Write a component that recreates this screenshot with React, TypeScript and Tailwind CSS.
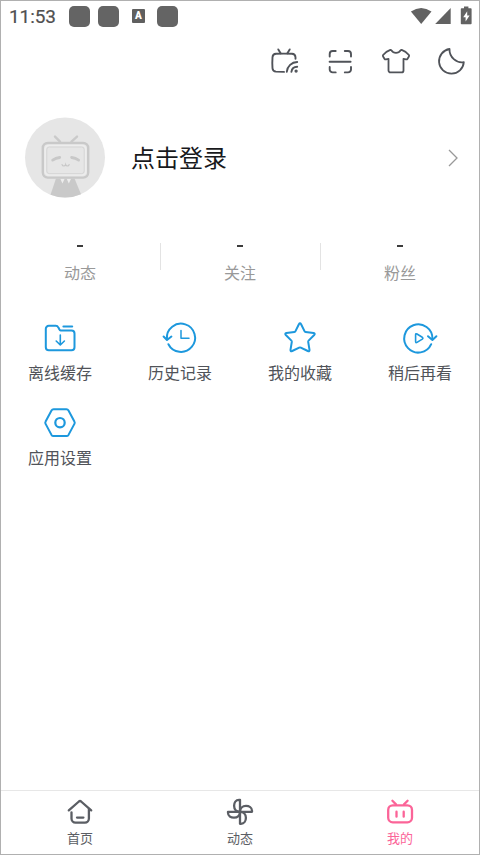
import React from "react";

interface MenuItem {
  label: string;
  icon: React.ReactNode;
}

const STATS = ["动态", "关注", "粉丝"];

interface LineProps {
  size: number;
  width?: number;
  className?: string;
  children: React.ReactNode;
}

// Shared stroke setup for the line icons
const Line: React.FC<LineProps> = ({ size, width = 2, className = "", children }) => (
  <svg
    width={size}
    height={size}
    viewBox={`0 0 ${size} ${size}`}
    fill="none"
    stroke="currentColor"
    strokeWidth={width}
    strokeLinecap="round"
    strokeLinejoin="round"
    className={`block shrink-0 ${className}`}
  >
    {children}
  </svg>
);

const MENU: MenuItem[] = [
  {
    label: "离线缓存",
    icon: (
      <>
        <path d="M20.6 12.4H31.5a3 3 0 0 1 3 3V29.2a3 3 0 0 1-3 3H8.8a3 3 0 0 1-3-3V10.8a3 3 0 0 1 3-3H15.8c1.6 0 2 .6 2.6 1.8l1 1.8q.4 1 1.2 1" />
        <path d="M23.4 8.6h8.8" />
        <path d="M20.3 17v9.6M16.2 23l4.1 4 4.1-4" strokeWidth={1.6} />
      </>
    ),
  },
  {
    label: "历史记录",
    icon: (
      <>
        <path d="M8.4 26.2A14.1 14.1 0 1 0 6.9 20.9" />
        <path d="M3.6 18.5l3.4 3.5 4.4-3.5" />
        <path d="M21 12.4v7.8h8" strokeWidth={1.5} />
      </>
    ),
  },
  {
    label: "我的收藏",
    icon: (
      <path d="M18.9 6.3q1.1-1.9 2.2 0l3.4 6.8q.3.7 1.1.8l8 1.2q1.9.4.6 1.9l-5.6 5.6q-.5.5-.4 1.3l1.3 7.9q.2 2-1.7 1.2l-7-3.4q-.8-.4-1.6 0l-7 3.4q-1.9.8-1.7-1.2l1.3-7.9q.1-.8-.4-1.3l-5.6-5.6q-1.3-1.5.6-1.9l8-1.2q.8-.1 1.1-.8z" />
    ),
  },
  {
    label: "稍后再看",
    icon: (
      <>
        <path d="M31.2 26.2A14.1 14.1 0 1 1 32.4 21" />
        <path d="M28 18.2l4.4 3.7 4-3.7" />
        <path d="M15.6 16.8q0-1.6 1.4-.8l5.3 3.3q1.2.9 0 1.8L17 24.4q-1.4.8-1.4-.8z" strokeWidth={1.6} />
      </>
    ),
  },
  {
    label: "应用设置",
    icon: (
      <>
        <path d="M13.6 6.3H26.4a2.4 2.4 0 0 1 2.1 1.2l5.9 11q.7 1.2 0 2.4l-5.9 11a2.4 2.4 0 0 1-2.1 1.2H13.6a2.4 2.4 0 0 1-2.1-1.2l-5.9-11q-.7-1.2 0-2.4l5.9-11a2.4 2.4 0 0 1 2.1-1.2z" />
        <circle cx={20} cy={19.7} r={4.7} strokeWidth={2.2} />
      </>
    ),
  },
];

const FAN_PETAL = "M16 15.8V3.8H15c-3.2 0-4.9 3-4.9 6 0 3.5 2.3 6 5.9 6z";

const TABS: MenuItem[] = [
  {
    label: "首页",
    icon: (
      <>
        <path d="M4.8 14.4L14.9 5.5q1.1-.9 2.2 0l10.1 8.9" />
        <path d="M7.5 16.3v6.3a4 4 0 0 0 4 4h9.400a4 4 0 0 0 4-4v-9.200" />
        <path d="M13 21.6h6.4" />
      </>
    ),
  },
  {
    label: "动态",
    icon: (
      <>
        {[0, 90, 180, 270].map((deg) => (
          <path key={deg} d={FAN_PETAL} transform={`rotate(${deg} 16 15.8)`} />
        ))}
      </>
    ),
  },
  {
    label: "我的",
    icon: (
      <>
        <rect x={4.2} y={9.3} width={23.8} height={17} rx={4.6} />
        <path d="M8.4 4.8l3.6 3.6M23.6 4.8L20 8.4M12.5 15.7v5M19.7 15.7v5" />
      </>
    ),
  },
];

function StatusBar() {
  return (
    <div className="flex h-8 items-center px-2 text-[#626262]">
      <span className="w-[61px] pt-0.5 pl-px font-['Roboto'] text-[19px] leading-[30px] tracking-[-0.1px] text-[#505050] [-webkit-text-stroke:0.2px_#505050]">
        11:53
      </span>
      <div className="flex items-center gap-2">
        <span className="h-[21px] w-[21px] rounded-[5px] bg-[#646464]" />
        <span className="h-[21px] w-[21px] rounded-[5px] bg-[#646464]" />
      </div>
      <span className="ml-[13px] flex h-[14px] w-[13px] items-center justify-center rounded-[1px] bg-[#5f5f5f] font-['Roboto'] text-[10px] font-black leading-none text-white">
        A
      </span>
      <span className="ml-3 h-[21px] w-[21px] rounded-[5px] bg-[#646464]" />
      <svg width="62" height="20" viewBox="0 0 62 20" fill="currentColor" className="ml-auto block">
        <path d="M0.9 5.6Q11.2-1.4 21.5 5.6L11.2 18z" />
        <path d="M40.7 2v16H25.2z" />
        <path d="M54 2.200V.6h4.4v1.6h2.400q.8 0 .8.8v14.400q0 .8-.8.8h-9.200q-.8 0-.8-.8V3q0-.8.8-.8z" />
        <path d="M57.2 5.2l-4 6h2.4v4.4l4-6h-2.4z" fill="white" />
      </svg>
    </div>
  );
}

function TopActions() {
  return (
    <div className="mt-[14px] flex justify-end gap-6 pr-3 text-[#505359]">
      {/* Cast */}
      <Line size={32} width={1.9}>
        <path d="M16 25.9L8 25.6q-3.3-.2-3.5-3.4-.4-5.5 0-11 .2-3.2 3.5-3.4 8-.4 16 0 3.3.2 3.5 3.4v1.5" />
        <path d="M10.3 3.4l2.3 3.9M21.7 3.4l-2.3 3.9" />
        <path d="M18.8 25.8A10.6 10.6 0 0 1 29.2 16M23.4 25.8A6 6 0 0 1 29.2 20.7" />
        <circle cx={28.1} cy={25.1} r={0.7} fill="currentColor" />
      </Line>
      {/* Scan */}
      <Line size={32} width={1.9}>
        <path d="M5.7 10.5V8a3 3 0 0 1 3-3h3M20.8 5H24a3 3 0 0 1 3 3v2.5M5.7 20.9v2.5a3 3 0 0 0 3 3h3M20.8 26.4H24a3 3 0 0 0 3-3v-2.5M5.6 15.7h21" />
      </Line>
      {/* Theme */}
      <Line size={32} width={1.8}>
        <path d="M10.3 3.9q.6-.2 1 .4 1.7 2.6 4.7 2.6t4.7-2.6q.4-.6 1-.4 4.4 1.5 7.2 5.1.5.8 0 1.6l-1.5 2.3q-.5.7-1.4.5l-2.5-.6V24.4a2 2 0 0 1-2 2H10.5a2 2 0 0 1-2-2V12.8l-2.5.6q-.9.2-1.4-.5l-1.5-2.3q-.5-.8 0-1.6 2.8-3.6 7.2-5.1z" />
      </Line>
      {/* Night mode */}
      <Line size={32} width={1.8}>
        <path d="M13.5 3A12.4 12.4 0 1 0 27.8 16.1C20.5 17.4 13.2 11.2 13.5 3z" />
      </Line>
    </div>
  );
}

function Avatar() {
  return (
    <svg width="80" height="80" viewBox="0 0 80 80" fill="none" className="block shrink-0 overflow-visible">
      <circle cx={40} cy={39.5} r={40} fill="#e6e6e6" />
      <path d="M31 60.5h18.5L56 76.2A40 40 0 0 1 25.5 76.7z" fill="#c9c9c9" />
      <path d="M35.2 60.5l2.2 5 2.4-5zM41.6 60.5l2.2 5 2.4-5z" fill="#ededed" />
      <path d="M30 18.6l5 5M52 18.6l-5.5 5" stroke="#cacaca" strokeWidth={2.4} strokeLinecap="round" />
      <rect x={17.8} y={25} width={45.4} height={34.6} rx={5} stroke="#c9c9c9" strokeWidth={2.4} />
      <rect x={20.3} y={27.5} width={40.4} height={29.6} rx={3.5} stroke="#ededed" strokeWidth={1.5} />
      <rect x={21.8} y={29} width={37.4} height={26.6} rx={2.5} stroke="#d4d4d4" strokeWidth={0.9} />
      <path d="M27.7 42.1q3-2 7-2.6M46.6 39.5q4 .6 7 2.6" stroke="#c8c8c8" strokeWidth={2.8} strokeLinecap="round" />
      <path d="M37 46.5q.4 1.5 1.8 1.5t1.8-1.5q.4 1.5 1.8 1.5t1.8-1.5" stroke="#c8c8c8" strokeWidth={1.1} strokeLinecap="round" />
    </svg>
  );
}

export default function App() {
  return (
    <div className="flex h-[855px] w-[480px] flex-col bg-white font-['Noto_Sans_CJK_SC',sans-serif] shadow-[inset_0_0_0_1px_#b0b0b0]">
      <StatusBar />
      <TopActions />

      {/* Login row */}
      <div className="mt-10 flex items-center pl-[25px] pr-[22px]">
        <Avatar />
        <span className="-mt-0.5 ml-[26px] text-2xl leading-8 text-[#18191c]">点击登录</span>
        <svg width="10" height="18" viewBox="0 0 10 18" fill="none" stroke="#999999" strokeWidth={1.3} className="-mt-px ml-auto block">
          <path d="M1 1l8 8-8 8" />
        </svg>
      </div>

      {/* Counters */}
      <div className="mt-[37px] grid grid-cols-3">
        {STATS.map((label, i) => (
          <div key={label} className="relative flex flex-col items-center">
            {i > 0 && <span className="absolute left-0 top-2 h-[27px] w-px bg-[#e3e3e3]" />}
            <span className="flex h-5 items-end pb-2">
              <span className="h-[2px] w-[6px] bg-[#3c3c3c]" />
            </span>
            <span className="mt-[5px] text-base leading-6 text-[#999999]">{label}</span>
          </div>
        ))}
      </div>

      {/* Shortcuts */}
      <div className="mt-[34px] grid grid-cols-4">
        {MENU.map((item) => (
          <div key={item.label} className="flex h-[85px] flex-col items-center">
            <Line size={40} className="text-[#1d98dd]">
              {item.icon}
            </Line>
            <span className="mt-[2px] text-base leading-6 text-[#505359]">{item.label}</span>
          </div>
        ))}
      </div>

      {/* Bottom tabs */}
      <div className="mx-px mb-px mt-auto grid h-16 grid-cols-[158px_162px_158px] border-t border-[#e7e7e7]">
        {TABS.map((tab) => (
          <div
            key={tab.label}
            className={`flex flex-col items-center pt-[5px] ${tab.label === "我的" ? "text-[#fb6498]" : "text-[#5b5e64]"}`}
          >
            <Line size={32} width={2.3}>
              {tab.icon}
            </Line>
            <span className="text-[13px] leading-5">{tab.label}</span>
          </div>
        ))}
      </div>
    </div>
  );
}
